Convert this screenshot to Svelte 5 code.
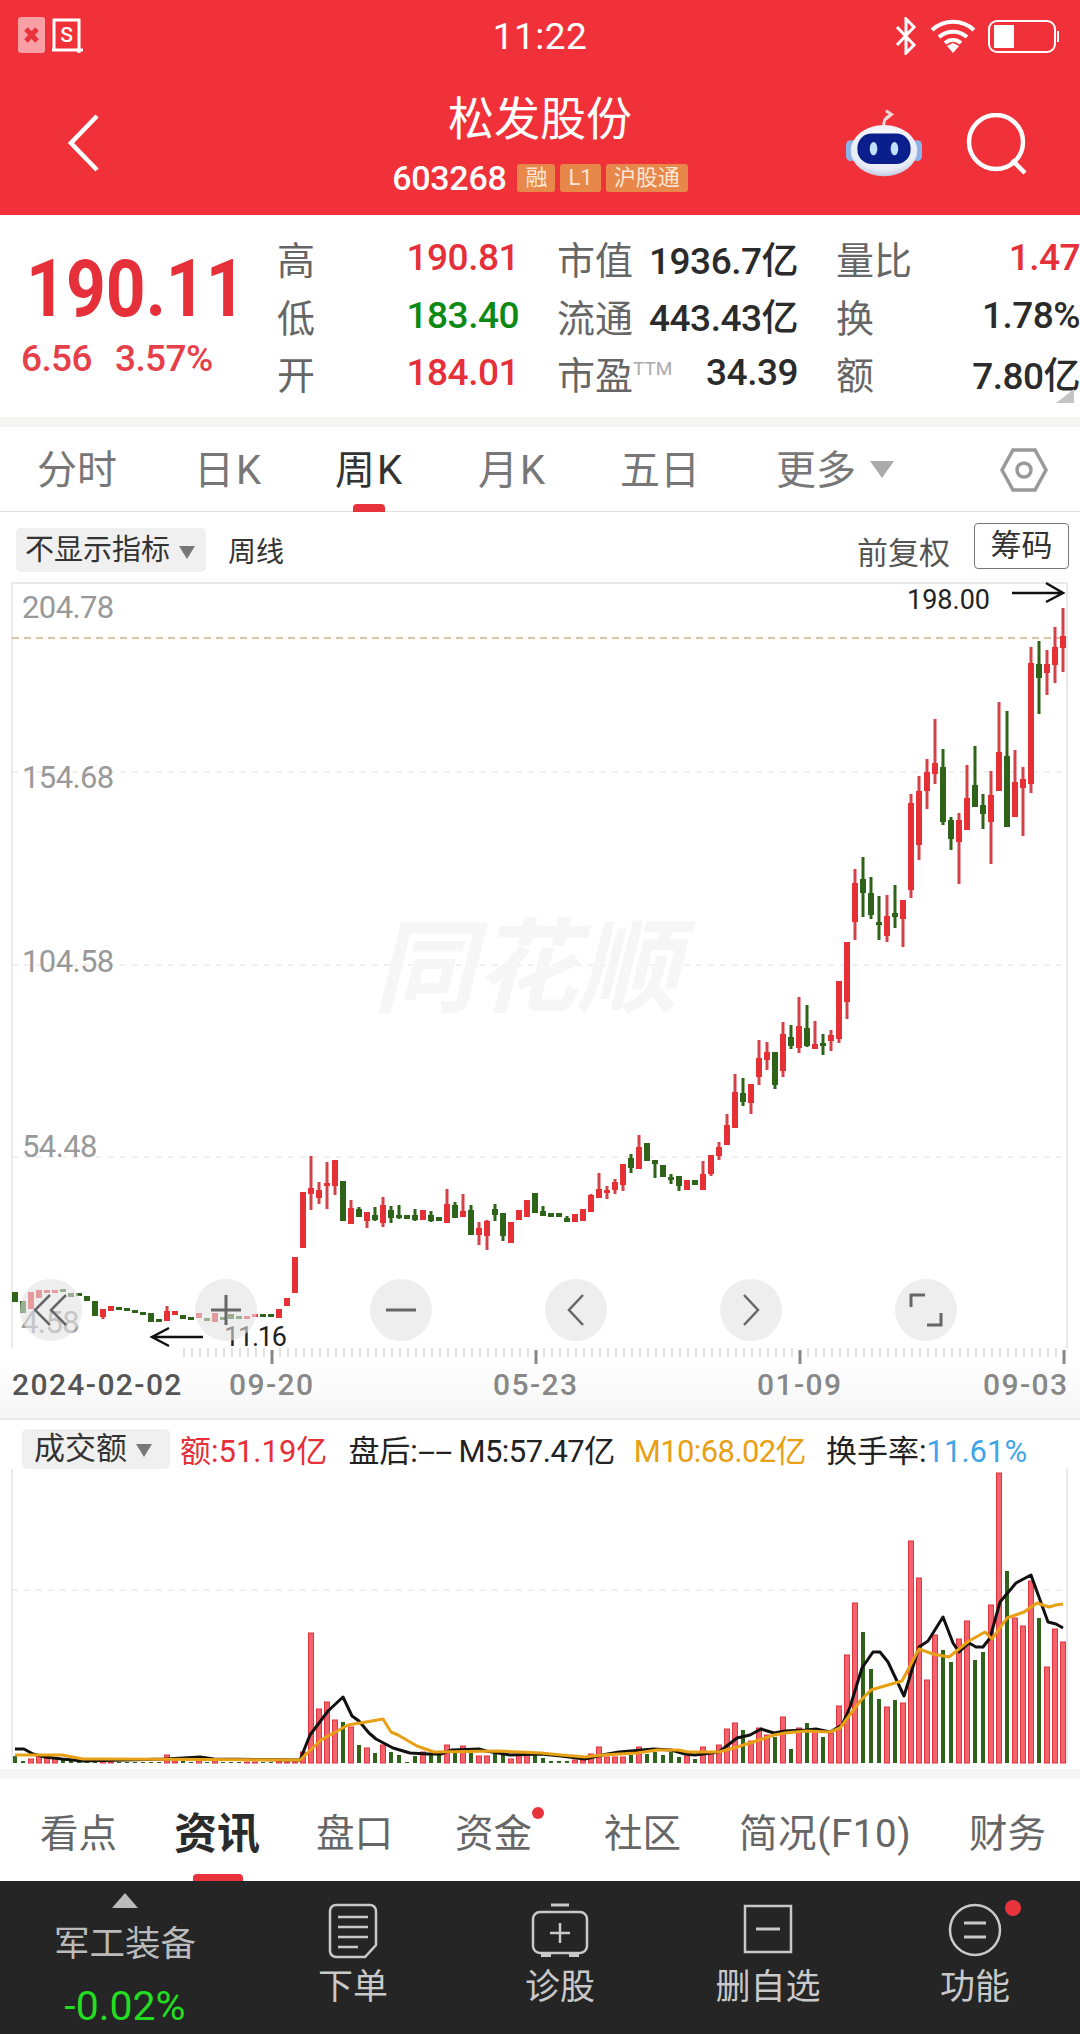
<script>
  // weekly K-line, left to right, 8px pitch starting at x=15
  // [colour, high, bodyTop, bodyBottom, low] in page pixels
  const raw = `g1292 1292 1302 1302,g1301 1301 1313 1313,r1292 1292 1309 1309,r1290 1290 1298 1298,r1290 1290 1293 1293,r1290 1290 1293 1293,g1289 1289 1292 1292,g1293 1293 1297 1297,g1293 1293 1295 1295,g1296 1296 1301 1301,g1301 1301 1316 1316,r1309 1309 1317 1319,r1306 1306 1311 1311,g1307 1307 1309 1309,g1308 1308 1310 1310,g1310 1310 1312 1312,g1312 1312 1314 1314,g1313 1313 1322 1322,g1319 1319 1322 1322,r1306 1311 1321 1321,r1311 1311 1315 1315,g1315 1315 1319 1319,g1317 1317 1319 1319,r1313 1313 1318 1318,g1318 1318 1321 1321,r1313 1313 1322 1322,g1317 1317 1320 1320,g1314 1314 1319 1319,g1316 1316 1319 1319,r1316 1316 1319 1319,r1314 1314 1317 1317,g1314 1314 1317 1317,g1314 1314 1317 1317,r1309 1309 1318 1318,r1298 1298 1306 1306,r1257 1257 1293 1293,r1192 1192 1248 1248,r1156 1188 1194 1210,r1182 1190 1198 1204,r1162 1183 1186 1209,r1160 1160 1186 1195,g1181 1181 1221 1221,r1200 1208 1224 1224,g1207 1209 1217 1217,r1212 1212 1221 1228,g1207 1215 1220 1221,r1197 1205 1223 1227,g1206 1210 1218 1223,g1205 1215 1218 1219,g1215 1215 1219 1219,g1209 1215 1220 1221,r1210 1210 1220 1220,g1211 1215 1221 1222,g1217 1217 1221 1221,r1189 1204 1223 1223,g1202 1205 1218 1218,r1194 1211 1217 1217,g1205 1210 1235 1235,r1222 1228 1235 1245,r1220 1221 1236 1250,g1204 1209 1215 1221,g1213 1213 1236 1241,r1222 1222 1243 1243,r1210 1210 1220 1220,r1200 1200 1217 1217,g1193 1193 1213 1213,g1206 1211 1216 1216,g1213 1213 1217 1217,g1213 1213 1217 1217,g1216 1218 1222 1222,r1214 1214 1222 1222,r1209 1209 1221 1221,r1194 1195 1212 1212,r1173 1189 1198 1198,r1186 1190 1192 1199,r1179 1182 1190 1194,r1164 1164 1185 1191,g1154 1158 1168 1173,r1135 1147 1169 1169,g1143 1143 1161 1161,g1160 1160 1164 1178,g1165 1165 1177 1177,g1174 1177 1180 1184,g1176 1176 1186 1191,r1180 1180 1190 1190,g1180 1180 1185 1185,r1161 1174 1190 1190,r1155 1155 1174 1176,r1142 1147 1156 1160,r1114 1125 1145 1145,r1074 1092 1128 1128,g1078 1093 1102 1106,r1084 1084 1103 1114,r1040 1058 1077 1085,r1042 1052 1060 1070,g1052 1052 1085 1089,r1022 1034 1071 1077,g1025 1037 1046 1049,r997 1026 1048 1053,g1005 1028 1046 1047,r1021 1044 1049 1049,g1034 1043 1045 1055,r1030 1035 1041 1051,r981 981 1039 1043,r942 942 1002 1019,r869 883 922 940,g857 879 893 917,g877 893 915 919,g896 922 924 940,r895 916 936 942,g885 913 917 928,r900 900 919 947,r794 803 890 898,r776 791 845 860,r759 772 791 809,r719 763 774 784,g749 767 822 825,g817 820 839 850,r813 820 842 884,r765 798 830 830,g746 785 807 807,g794 805 814 829,r771 795 822 864,r702 752 791 791,g711 756 827 827,r750 782 817 817,r767 779 788 836,r647 663 784 793,g641 664 678 714,r650 664 673 695,r627 647 665 683,r608 636 648 672`
  const candles = raw.split(',').map((s, i) => {
    const [h, t, b, l] = s.slice(1).split(' ').map(Number)
    return { x: 15 + i * 8, up: s[0] === 'r', h, t, b, l }
  })

  // volume bar tops, same x pitch, baseline 1763
  const volRaw = `g1756 g1761 r1759 r1756 r1758 r1758 g1760 g1761 g1762 g1762 g1762 r1761 r1762 g1762 g1762 g1762 g1762 g1762 g1762 r1755 r1761 g1761 g1762 r1758 g1762 r1760 g1762 g1762 g1762 r1762 r1762 g1762 g1762 r1761 r1762 r1762 r1752 r1633 r1709 r1702 r1720 g1722 r1727 g1745 r1748 g1753 r1745 g1752 g1755 g1762 g1756 r1752 g1753 g1754 r1745 g1753 r1746 g1753 r1756 r1756 g1753 g1754 r1759 r1755 r1755 g1755 g1758 g1761 g1761 g1761 r1760 r1760 r1754 r1747 r1757 r1757 r1757 g1755 r1747 g1754 g1752 g1755 g1752 g1757 r1756 g1759 r1747 r1752 r1745 r1729 r1723 g1730 r1741 r1728 r1735 g1737 r1717 g1749 r1728 g1723 r1730 g1737 r1733 r1706 r1655 r1603 g1632 g1669 g1699 r1707 g1700 r1703 r1541 r1578 r1680 r1635 g1650 g1662 r1639 r1621 g1660 g1652 r1605 r1473 g1571 r1618 r1626 r1581 g1618 r1667 r1629 r1642`
  const vols = volRaw.split(' ').map((s, i) => ({ x: 15 + i * 8, up: s[0] === 'r', top: +s.slice(1) }))

  const m5 = '15,1749 24,1749 33,1754 45,1757 62,1759 83,1761 166,1759 200,1757 214,1759 300,1760 310,1735 328,1711 343,1697 352,1716 359,1721 369,1733 376,1739 393,1748 410,1753 428,1754 441,1754 452,1750 479,1749 486,1751 510,1755 541,1754 561,1756 585,1759 602,1755 619,1752 654,1749 671,1750 685,1754 695,1755 719,1752 737,1738 750,1735 761,1729 774,1733 785,1731 806,1730 816,1729 830,1732 842,1725 850,1707 862,1668 873,1652 880,1652 888,1662 904,1696 919,1647 928,1641 943,1617 953,1643 959,1652 969,1643 976,1647 983,1647 990,1638 1000,1602 1016,1583 1031,1575 1048,1622 1056,1624 1063,1628'
  const m10 = '15,1755 62,1755 83,1759 103,1759 300,1760 321,1740 348,1725 366,1722 383,1719 391,1732 398,1735 417,1746 434,1752 497,1751 541,1753 561,1755 585,1757 602,1755 637,1753 657,1750 678,1750 688,1752 719,1752 737,1747 750,1743 774,1735 785,1733 806,1731 830,1732 840,1728 861,1700 871,1690 881,1687 902,1681 919,1649 933,1654 949,1657 969,1641 985,1632 992,1639 1007,1618 1024,1612 1037,1603 1049,1607 1056,1605 1063,1604'

  const ticks = []
  for (let x = 1064; x > 180; x -= 8) ticks.push({ x, major: (1064 - x) % 264 === 0 })

  const rows = [
    { a: '高', av: '190.81', ac: 'red', b: '市值', bv: '1936.7亿', c: '量比', cv: '1.47', cc: 'red' },
    { a: '低', av: '183.40', ac: 'green', b: '流通', bv: '443.43亿', c: '换', cv: '1.78%', cc: '' },
    { a: '开', av: '184.01', ac: 'red', b: '市盈', sup: 'TTM', bv: '34.39', c: '额', cv: '7.80亿', cc: '' }
  ]
</script>

<div class="page">
  <header class="head">
    <div class="status">
      <div class="status-left">
        <svg width="66" height="38" viewBox="0 0 66 38">
          <rect x="0" y="0" width="27" height="36" rx="3" fill="#f9a0a6" />
          <path d="M8 12l11 12M19 12L8 24" stroke="#e8333c" stroke-width="5" />
          <path d="M36 3h25v30H36zM34 33h31M61 3v33" fill="none" stroke="#fff" stroke-width="3" />
          <text x="48.500" y="25" text-anchor="middle" class="s-glyph">S</text>
        </svg>
      </div>
      <span class="clock">11:22</span>
      <div class="status-right">
        <svg width="24" height="38" viewBox="0 0 24 38">
          <path d="M3 10l17 18-8 8V2l8 8L3 28" fill="none" stroke="#fff" stroke-width="3" />
        </svg>
        <svg width="46" height="34" viewBox="0 0 46 34">
          <path d="M2 11c12-11 30-11 42 0M9 18c8-7 20-7 28 0M15 24c5-4 11-4 16 0" fill="none" stroke="#fff" stroke-width="4" />
          <path d="M17 27l6-3 6 3-6 7z" fill="#fff" />
        </svg>
        <svg width="72" height="33" viewBox="0 0 72 33">
          <rect x="1" y="1" width="66" height="31" rx="8" fill="none" stroke="#fff" stroke-width="2" />
          <rect x="6" y="5" width="20" height="23" fill="#fff" />
          <rect x="69" y="11" width="2" height="11" fill="#fff" />
        </svg>
      </div>
    </div>
    <div class="nav">
      <svg class="back" width="32" height="58" viewBox="0 0 32 58">
        <path d="M29 2L3 29l26 27" fill="none" stroke="#fff" stroke-width="4.500" />
      </svg>
      <div class="name">
        <div class="title">松发股份</div>
        <div class="code">
          <span class="num">603268</span>
          <span class="tag">融</span><span class="tag">L1</span><span class="tag">沪股通</span>
        </div>
      </div>
      <svg class="robot" width="76" height="70" viewBox="0 0 80 70">
        <defs>
          <radialGradient id="rb" cx="50%" cy="35%" r="70%">
            <stop offset="0" stop-color="#ffffff" />
            <stop offset="0.75" stop-color="#e8ecf6" />
            <stop offset="1" stop-color="#b4bdd4" />
          </radialGradient>
        </defs>
        <path d="M40 18c-1-6 1-10 6-12M42 1l6 4-6 5" fill="none" stroke="#f2d8d8" stroke-width="3" />
        <rect x="0" y="32" width="10" height="22" rx="5" fill="#8fb2e6" />
        <rect x="70" y="32" width="10" height="22" rx="5" fill="#8fb2e6" />
        <ellipse cx="40" cy="43" rx="35" ry="27" fill="url(#rb)" />
        <rect x="12" y="25" width="56" height="32" rx="15" fill="#0b1f8c" />
        <ellipse cx="29" cy="41" rx="4" ry="7" fill="#bfe0ff" />
        <ellipse cx="51" cy="41" rx="4" ry="7" fill="#bfe0ff" />
      </svg>
      <svg class="search" width="62" height="62" viewBox="0 0 62 62">
        <circle cx="30" cy="29" r="27" fill="none" stroke="#fff" stroke-width="4.500" />
        <path d="M46 47l13 13" stroke="#fff" stroke-width="4.500" />
      </svg>
    </div>
  </header>

  <section class="quote">
    <div class="price">
      <div class="big">190.11</div>
      <div class="chg"><span>6.56</span><span>3.57%</span></div>
    </div>
    <div class="stats">
      {#each rows as r}
        <div class="cell"><span class="lab">{r.a}</span><span class="val {r.ac}">{r.av}</span></div>
        <div class="cell">
          <span class="lab">{r.b}{#if r.sup}<sup>{r.sup}</sup>{/if}</span><span class="val dark">{r.bv}</span>
        </div>
        <div class="cell"><span class="lab">{r.c}</span><span class="val dark {r.cc}">{r.cv}</span></div>
      {/each}
    </div>
    <span class="corner"></span>
  </section>
  <div class="band"></div>

  <nav class="periods">
    <span class="p p1">分时</span>
    <span class="p p2">日K</span>
    <span class="p p3 on">周K</span>
    <span class="p p4">月K</span>
    <span class="p p5">五日</span>
    <span class="p p6">更多<i class="tri big-tri"></i></span>
    <svg class="hex" width="48" height="46" viewBox="0 0 48 46">
      <path d="M13 3h22l11 20-11 20H13L2 23z" fill="none" stroke="#999" stroke-width="3.500" />
      <circle cx="24" cy="23" r="7" fill="none" stroke="#999" stroke-width="3.500" />
    </svg>
  </nav>

  <div class="tools">
    <span class="pill">不显示指标<i class="tri"></i></span>
    <span class="line-name">周线</span>
    <span class="adj">前复权</span>
    <span class="chip">筹码</span>
  </div>

  <div class="chart">
    <svg width="1080" height="766" viewBox="0 582 1080 766">
      <path d="M12 1348V583H1067V1348" fill="none" stroke="#e9e9e9" stroke-width="2" />
      <line x1="12" x2="1066" y1="772" y2="772" class="grid" />
      <line x1="12" x2="1066" y1="965" y2="965" class="grid" />
      <line x1="12" x2="1066" y1="1157" y2="1157" class="grid" />
      <line x1="12" x2="1066" y1="638" y2="638" class="ref" />
      <text x="526" y="1004" class="mark" text-anchor="middle">同花顺</text>
      <text x="22" y="618" class="ax">204.78</text>
      <text x="22" y="788" class="ax">154.68</text>
      <text x="22" y="972" class="ax">104.58</text>
      <text x="22" y="1157" class="ax">54.48</text>
      <text x="21" y="1333" class="ax">4.58</text>
      {#each candles as c}
        <rect x={c.x - 1.5} y={c.h} width="3" height={c.l - c.h} fill={c.up ? '#d2434a' : '#2f6319'} />
        <rect x={c.x - 3} y={c.t} width="6" height={Math.max(c.b - c.t, 3)} fill={c.up ? '#e53035' : '#2f6319'} />
      {/each}
      <text x="907" y="609" class="note">198.00</text>
      <path d="M1012 593h50M1046 583l17 10-17 9" fill="none" stroke="#111" stroke-width="2.500" />
      <text x="224" y="1346" class="note tight">11.16</text>
      <path d="M203 1337h-51M169 1328l-17 9 17 9" fill="none" stroke="#111" stroke-width="2.500" />
    </svg>
    <div class="ctrls">
      <span class="ctrl"><svg width="36" height="34" viewBox="0 0 36 34"><path d="M17 2L2 17l15 15M33 2L18 17l15 15" fill="none" stroke="#666" stroke-width="2.500" /></svg></span>
      <span class="ctrl"><svg width="30" height="30" viewBox="0 0 30 30"><path d="M15 0v30M0 15h30" stroke="#666" stroke-width="3" /></svg></span>
      <span class="ctrl"><svg width="30" height="4" viewBox="0 0 30 4"><path d="M0 2h30" stroke="#666" stroke-width="3" /></svg></span>
      <span class="ctrl"><svg width="18" height="32" viewBox="0 0 18 32"><path d="M16 1L2 16l14 15" fill="none" stroke="#666" stroke-width="2.500" /></svg></span>
      <span class="ctrl"><svg width="18" height="32" viewBox="0 0 18 32"><path d="M2 1l14 15L2 31" fill="none" stroke="#666" stroke-width="2.500" /></svg></span>
      <span class="ctrl"><svg width="34" height="34" viewBox="0 0 34 34"><path d="M2 14V2h14M32 20v12H18" fill="none" stroke="#666" stroke-width="3" /></svg></span>
    </div>
  </div>

  <div class="axis">
    <svg class="ticks" width="1080" height="16" viewBox="0 0 1080 16">
      {#each ticks as t}
        <rect x={t.x - (t.major ? 1.5 : 0.5)} y={t.major ? 2 : 0} width={t.major ? 3 : 1} height={t.major ? 14 : 9} fill={t.major ? '#888' : '#c4c4c4'} />
      {/each}
    </svg>
    <div class="dates">
      <span class="d first">2024-02-02</span>
      <span class="d">09-20</span>
      <span class="d">05-23</span>
      <span class="d">01-09</span>
      <span class="d last">09-03</span>
    </div>
  </div>

  <div class="vol">
    <div class="legend">
      <span class="pill vp">成交额<i class="tri"></i></span>
      <span class="red amt">额:51.19亿</span>
      <span class="blk after">盘后:<span class="dash">--</span></span>
      <span class="blk m5">M5:57.47亿</span>
      <span class="org">M10:68.02亿</span>
      <span class="blk turn">换手率:<span class="blu">11.61%</span></span>
    </div>
    <svg class="vol-svg" width="1080" height="294" viewBox="0 1469 1080 294">
      <path d="M12 1469V1763M1067 1469V1763" stroke="#e9e9e9" stroke-width="2" />
      <line x1="12" x2="1066" y1="1590" y2="1590" class="grid" />
      {#each vols as v}
        {#if v.up}
          <rect x={v.x - 2.5} y={v.top} width="5" height={1763 - v.top} fill="#f2636b" stroke="#e0343f" stroke-width="1" />
        {:else}
          <rect x={v.x - 2} y={v.top} width="4" height={1763 - v.top} fill="#2f6319" />
        {/if}
      {/each}
      <polyline points={m5} fill="none" stroke="#111" stroke-width="3" stroke-linejoin="round" />
      <polyline points={m10} fill="none" stroke="#e8a014" stroke-width="3" stroke-linejoin="round" />
    </svg>
  </div>
  <div class="band low"></div>

  <nav class="subs">
    <span class="sub s1">看点</span>
    <span class="sub s2 on">资讯</span>
    <span class="sub s3">盘口</span>
    <span class="sub s4">资金<i class="dot"></i></span>
    <span class="sub s5">社区</span>
    <span class="sub s6">简况(F10)</span>
    <span class="sub s7">财务</span>
  </nav>

  <footer class="foot">
    <div class="sector">
      <i class="up"></i>
      <span class="sname">军工装备</span>
      <span class="spct">-0.02%</span>
    </div>
    <div class="act">
      <svg width="50" height="56" viewBox="0 0 50 56">
        <path d="M8 2h34a6 6 0 0 1 6 6v34l-11 12H8a6 6 0 0 1-6-6V8a6 6 0 0 1 6-6z" fill="none" stroke="#c9c9c9" stroke-width="2.500" />
        <path d="M10 14h30M10 24h30M10 34h30M10 44h20" stroke="#c9c9c9" stroke-width="2.500" />
      </svg>
      <span>下单</span>
    </div>
    <div class="act">
      <svg width="58" height="56" viewBox="0 0 58 56">
        <path d="M20 2h18" stroke="#c9c9c9" stroke-width="3" />
        <rect x="2" y="9" width="54" height="41" rx="7" fill="none" stroke="#c9c9c9" stroke-width="2.500" />
        <path d="M29 20v20M19 30h20" stroke="#c9c9c9" stroke-width="2.500" />
        <path d="M10 52h10M38 52h10" stroke="#c9c9c9" stroke-width="4" />
      </svg>
      <span>诊股</span>
    </div>
    <div class="act">
      <svg width="50" height="56" viewBox="0 0 50 56">
        <rect x="2" y="3" width="46" height="46" fill="none" stroke="#c9c9c9" stroke-width="2.500" />
        <path d="M13 26h24" stroke="#c9c9c9" stroke-width="3" />
      </svg>
      <span>删自选</span>
    </div>
    <div class="act fn">
      <svg width="54" height="56" viewBox="0 0 54 56">
        <circle cx="27" cy="27" r="25" fill="none" stroke="#c9c9c9" stroke-width="2.500" />
        <path d="M16 20h22M16 34h22" stroke="#c9c9c9" stroke-width="3" />
      </svg>
      <i class="dot fdot"></i>
      <span>功能</span>
    </div>
  </footer>
</div>

<style>
  :global(body) { margin: 0; background: #fff; }
  .page {
    width: 1080px;
    height: 2034px;
    overflow: hidden;
    font-family: Roboto, "Noto Sans CJK SC", sans-serif;
    color: #333;
  }
  i { display: inline-block; font-style: normal; }

  .head { height: 215px; background: #f0313a; color: #fff; }
  .status { height: 72px; display: flex; align-items: center; padding: 0 20px 0 18px; position: relative; }
  .status-left { display: flex; margin-top: 0; }
  .s-glyph { font: 500 21px Roboto, sans-serif; fill: #fff; }
  .clock { position: absolute; left: 0; right: 0; text-align: center; font-size: 37px; letter-spacing: 0.5px; }
  .status-right { margin-left: auto; display: flex; align-items: center; gap: 12px; }
  .nav { height: 143px; position: relative; display: flex; align-items: flex-start; }
  .back { margin: 42px 0 0 68px; }
  .name { position: absolute; left: 0; right: 0; top: 20px; text-align: center; }
  .title { font-size: 46px; line-height: 54px; }
  .code { display: flex; justify-content: center; align-items: center; gap: 5px; margin-top: 17px; height: 30px; }
  .num { font-size: 34px; font-weight: 500; margin-right: 6px; letter-spacing: -0.3px; }
  .tag {
    height: 28px;
    min-width: 38px;
    box-sizing: border-box;
    text-align: center;
    line-height: 28px;
    padding: 0 8px;
    background: #e8874a;
    border-radius: 3px;
    font-size: 22px;
    color: #fbe6d6;
  }
  .robot { margin: 36px 0 0 746px; }
  .search { margin: 41px 0 0 44px; }

  .quote { height: 202px; display: flex; position: relative; background: #fff; }
  .price { width: 277px; flex: none; }
  .big {
    margin: 36px 0 0 26px;
    width: 250px;
    font-size: 79px;
    line-height: 76px;
    font-weight: 700;
    color: #e5303a;
    transform: scaleX(0.88);
    transform-origin: left center;
  }
  .chg { margin: 10px 0 0 21px; display: flex; gap: 23px; font-size: 37px; line-height: 44px; font-weight: 500; color: #e5404a; letter-spacing: -0.6px; }
  .stats {
    display: grid;
    grid-template-columns: 242px 241px 244px;
    grid-auto-rows: 57.5px;
    column-gap: 38px;
    padding-top: 14px;
  }
  .cell { display: flex; justify-content: space-between; align-items: center; white-space: nowrap; }
  .lab { font-size: 38px; color: #666; position: relative; }
  .lab sup { font-size: 19px; color: #aaa; position: absolute; left: 100%; top: 14px; line-height: 1; }
  .val { font-size: 37px; font-weight: 500; letter-spacing: -0.5px; }
  .val.dark { color: #2b2b2b; }
  .val.red, .red { color: #e5303a; }
  .val.green { color: #0d8a15; }
  .corner {
    position: absolute; right: 6px; bottom: 14px; width: 0; height: 0;
    border-left: 18px solid transparent; border-bottom: 14px solid #c4c4c4;
  }
  .band { height: 10px; background: #f6f3f3; }
  .band.low { margin-top: 6px; background: #f5f5f5; }

  .periods { height: 85px; position: relative; border-bottom: 1px solid #e2e2e2; box-sizing: border-box; }
  .p { position: absolute; top: 20px; line-height: 48px; font-size: 40px; color: #777; white-space: nowrap; }
  .p1 { left: 37px; } .p2 { left: 194px; letter-spacing: 2px; } .p3 { left: 335px; color: #333; letter-spacing: 2px; } .p4 { left: 478px; letter-spacing: 2px; } .p5 { left: 620px; } .p6 { left: 776px; }
  .p3::after {
    content: ''; position: absolute; left: 18px; bottom: -17px; width: 32px; height: 8px;
    background: #e8333c; border-radius: 4px 4px 0 0;
  }
  .tri { width: 0; height: 0; border-left: 8px solid transparent; border-right: 8px solid transparent; border-top: 13px solid #777; margin-left: 9px; vertical-align: middle; }
  .big-tri { border-left-width: 12px; border-right-width: 12px; border-top: 17px solid #aaa; margin: 0 0 8px 14px; }
  .hex { position: absolute; left: 1000px; top: 20px; }

  .tools { height: 70px; display: flex; align-items: center; box-sizing: border-box; padding: 6px 11px 0 16px; font-size: 29px; }
  .pill { background: #f0f0f0; border-radius: 5px; height: 44px; line-height: 44px; padding: 0 11px 0 9px; white-space: nowrap; color: #333; }
  .line-name { margin-left: 22px; font-size: 28px; }
  .adj { margin-left: auto; font-size: 31px; color: #555; }
  .chip { margin: 0 0 8px 24px; width: 95px; height: 46px; line-height: 44px; box-sizing: border-box; border: 1.5px solid #777; border-radius: 4px; text-align: center; font-size: 31px; color: #333; }

  .chart { height: 766px; position: relative; }
  .chart svg, .vol-svg { display: block; overflow: visible; }
  .grid { stroke: #ececec; stroke-width: 1.5; stroke-dasharray: 6 6; }
  .ref { stroke: #c9b48a; stroke-width: 1.5; stroke-dasharray: 7 5; }
  .ax { font: 400 31px Roboto, sans-serif; fill: #999; letter-spacing: -0.6px; }
  .note { font: 400 27px Roboto, sans-serif; fill: #222; }
  .note.tight { letter-spacing: -1.2px; }
  .mark { font: italic 700 102px "Noto Sans CJK SC", sans-serif; fill: #f6f6f6; }
  .ctrls { position: absolute; left: 20px; top: 697px; display: flex; gap: 113px; }
  .ctrl {
    width: 62px; height: 62px; border-radius: 50%;
    background: rgba(226, 226, 226, 0.6);
    display: flex; align-items: center; justify-content: center;
  }

  .axis { height: 70px; background: linear-gradient(#fff 10%, #f6f6f6 100%); }
  .ticks { display: block; }
  .dates { display: flex; padding-top: 3px; font-size: 30px; line-height: 36px; font-weight: 500; letter-spacing: 1.4px; color: #888; }
  .d { width: 264px; flex: none; }
  .d.first { width: 217px; margin-left: 12px; color: #555; }
  .d.last { width: auto; margin-left: -38px; }

  .vol { border-top: 2px solid #ececec; }
  .legend { height: 41px; display: flex; align-items: center; padding: 8px 0 0 22px; font-size: 31px; white-space: nowrap; }
  .vp { height: 40px; line-height: 40px; padding: 0 18px 0 12px; font-size: 31px; }
  .amt { margin-left: 10px; }
  .after { margin-left: 21px; width: 110px; flex: none; }
  .dash { display: inline-block; transform: scaleX(2); transform-origin: left center; }
  .m5 { letter-spacing: -0.5px; }
  .org { margin-left: 19px; letter-spacing: -0.6px; }
  .turn { margin-left: 20px; }
  .blk { color: #222; }
  .org { color: #e8a014; }
  .blu { color: #3fa5e8; }

  .subs { height: 102px; position: relative; background: #fff; }
  .sub { position: absolute; top: 31px; line-height: 48px; font-size: 38.500px; color: #666; white-space: nowrap; }
  .s1 { left: 40px; } .s2 { left: 174px; font-size: 43px; font-weight: 700; color: #2b2b2b; } .s3 { left: 316px; } .s4 { left: 455px; } .s5 { left: 604px; } .s6 { left: 739px; letter-spacing: 0.6px; } .s7 { left: 969px; }
  .s2::after { content: ''; position: absolute; left: 19px; bottom: -23px; width: 50px; height: 7px; background: #e8333c; border-radius: 4px 4px 0 0; }
  .dot { position: absolute; width: 12px; height: 12px; border-radius: 50%; background: #e8333c; right: -12px; top: -3px; }

  .foot { height: 153px; background: #252525; position: relative; display: flex; color: #c9c9c9; }
  .sector { position: absolute; left: 0; top: 0; width: 250px; display: flex; flex-direction: column; align-items: center; }
  .up { width: 0; height: 0; margin-top: 12px; border-left: 13px solid transparent; border-right: 13px solid transparent; border-bottom: 15px solid #bbb; }
  .sname { margin-top: 16px; font-size: 35.500px; line-height: 40px; color: #bbb; }
  .spct { margin-top: 18px; font-size: 41px; line-height: 48px; color: #22dd22; }
  .act { position: absolute; top: 22px; width: 200px; display: flex; flex-direction: column; align-items: center; font-size: 35px; line-height: 44px; }
  .act span { margin-top: 7px; white-space: nowrap; }
  .act:nth-child(2) { left: 253px; }
  .act:nth-child(3) { left: 460px; }
  .act:nth-child(4) { left: 668px; }
  .act:nth-child(5) { left: 875px; }
  .fdot { width: 16px; height: 16px; top: -3px; left: 130px; right: auto; }
</style>
